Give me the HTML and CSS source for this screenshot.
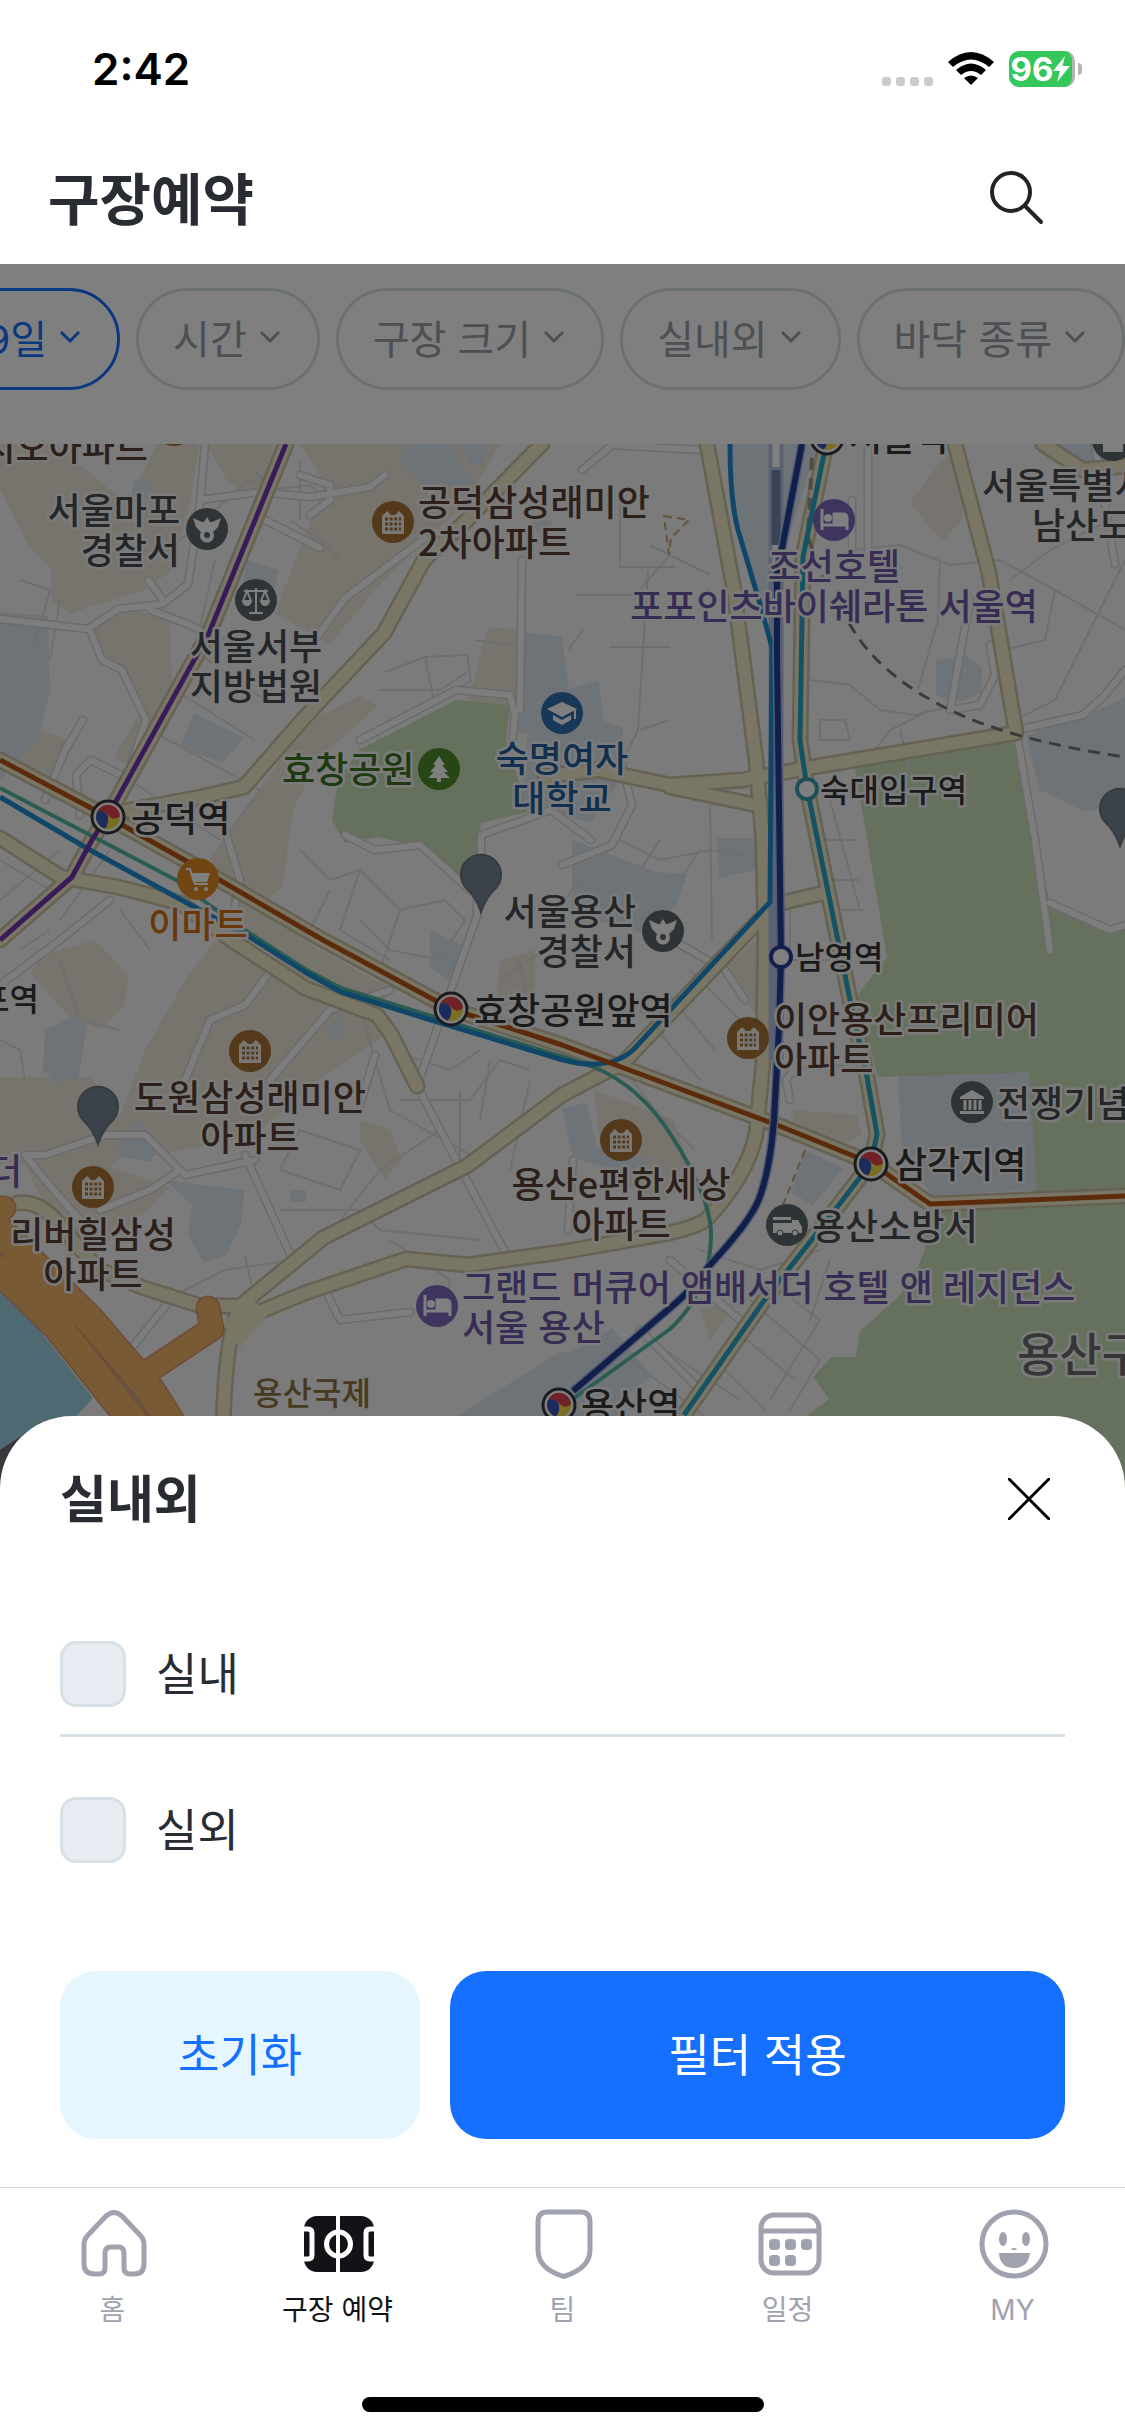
FILE: index.html
```html
<!DOCTYPE html>
<html lang="ko">

<head>
    <meta charset="UTF-8">
    <meta name="viewport" content="width=device-width, initial-scale=1.0">
    <title>구장예약</title>
    <link rel="stylesheet" href="styles.css">
</head>

<body>
    <!-- Status bar -->
    <div class="status">
        <span class="time">2:42</span>
        <div class="status-icons">
            <span class="dots"><i></i><i></i><i></i><i></i></span>
            <svg class="wifi" viewBox="0 0 46 34" width="46" height="34">
                <path d="M0 10Q23-10 46 10L41 15Q23 0 5 15Z" />
                <path d="M8 18Q23 5 38 18L33 23Q23 15 13 23Z" />
                <path d="M16 26Q23 21 30 26L23 33Z" />
            </svg>
            <span class="battery">96<svg viewBox="0 0 17 26" width="17" height="26">
                    <path d="M12 0L0 15h7L4 26 17 10H9.500Z" />
                </svg></span>
        </div>
    </div>

    <header class="header">
        <h1>구장예약</h1>
        <button class="icon-button" aria-label="검색">
            <svg viewBox="0 0 60 60" width="60" height="60">
                <circle cx="25" cy="24" r="19" />
                <path d="M39 38L55 54" />
            </svg>
        </button>
    </header>

    <main class="main">
        <!-- Filters -->
        <div class="filters">
            <button class="chip active">19일 <svg viewBox="0 0 22 14" width="22" height="14"><path d="M2 2l9 9 9-9" /></svg></button>
            <button class="chip">시간 <svg viewBox="0 0 22 14" width="22" height="14"><path d="M2 2l9 9 9-9" /></svg></button>
            <button class="chip">구장 크기 <svg viewBox="0 0 22 14" width="22" height="14"><path d="M2 2l9 9 9-9" /></svg></button>
            <button class="chip">실내외 <svg viewBox="0 0 22 14" width="22" height="14"><path d="M2 2l9 9 9-9" /></svg></button>
            <button class="chip">바닥 종류 <svg viewBox="0 0 22 14" width="22" height="14"><path d="M2 2l9 9 9-9" /></svg></button>
        </div>

        <!-- Map -->
        <svg class="map" viewBox="0 444 1125 1744">
            <defs>
                <g id="apt">
                    <circle r="21" fill="#a87436" />
                    <path d="M-11 12V-6l5-5 4 4h4l4-4 5 5v18z" fill="#f4f0ea" />
                    <path d="M-8-3H8M-8 2H8M-8 7H8" stroke="#a87436" stroke-width="3" stroke-dasharray="3 1.600" />
                </g>
                <g id="police">
                    <circle r="21" fill="#5d676d" />
                    <path d="M-14-11L-5-7H-3L0-12 3-7H5L14-11 11-2 6 3A7 7 0 1 1-6 3L-11-2z" fill="#fff" />
                    <circle cy="6" r="3" fill="#5d676d" />
                </g>
                <g id="hotel">
                    <circle r="21" fill="#7f69bd" />
                    <path d="M-12-11v21M-12 5H13M13 10V-2q0-4-4-4H0V4" fill="none" stroke="#fff" stroke-width="3" />
                    <path d="M0-6h9q4 0 4 4v6H0z" fill="#fff" />
                    <circle cx="-6" cy="-2" r="4" fill="#fff" />
                </g>
                <g id="station">
                    <circle r="16" fill="#fff" stroke="#34363d" stroke-width="3" />
                    <circle r="12" fill="#f6dc45" />
                    <path d="M-11-5A12 12 0 0 1 12-1Q7 4 2 0-5-8-11-5Z" fill="#e34250" />
                    <path d="M-11-5Q-5-8 0-1 1 7-3 11.500A12 12 0 0 1-11-5Z" fill="#3857bd" />
                </g>
                <path id="pin" d="M0 27Q-5 12-15 3A20 20 0 1 1 15 3Q5 12 0 27Z" fill="#788493" stroke="#6c7680" stroke-width="2" />
            </defs>

            <rect y="444" width="1125" height="1744" fill="#f7f7f7" />

            <!-- blocks -->
            <g fill="#efe8dc">
                <path d="M0 444h55l72 60 30-60h42l-8 55-20 72-28 20-26 8-30 8-16 8-20-15 0-32-22-22L0 490z" />
                <path d="M207 444h68l-18 55-30-18z" />
                <path d="M95 620l30-14 45 16 2 60-14 50 -20 40-24-15 27-46-20-36-24-20z" />
                <path d="M300 444h200l-35 60-80 75-55 65-55-30 30-80 20-50z" />
                <path d="M30 725l45 18-25 50-40-26z" />
                <path d="M310 720l50-24 18 10-58 52-26 50-12 80-40 30-32-60z" />
                <path d="M488 627l34 3-5 80-50-5z" />
                <path d="M145 1050l40-70 30-40 85 45 70 30 15 20-60 40-70 60-120 25-22-25z" />
                <path d="M0 1077h90l30 40 20 20-30 30 60 20-45 45-55 25L25 1165H0z" />
                <path d="M40 955l55-15 33 35-3 30-24 24-30-10-40-45z" />
                <path d="M240 890l80 60 75 40-18 15-75-28-60-45z" />
                <path d="M360 1120l30 10 12 30-18 20-24-40z" />
                <path d="M594 1090l80 30 20 60-30 20-60-20z" />
                <path d="M723 968l35-30v80z" />
                <path d="M795 1110l62 5 5 20-20 10-50-20z" />
                <path d="M942 460q30-20 20 60l-20 22-32-40z" fill="#efe6dc" />
                <path d="M500 960l35-10v45l-40 15z" />
                <path d="M700 1310l40-10-30 40z" />
                <path d="M80 1298l50 50-20 20-50-60z" />
            </g>
            <g fill="#dce6f1">
                <path d="M0 612l48 4 2 77-12 45L0 780z" />
                <path d="M405 444h42l28 38-45 8-32-28z" />
                <path d="M458 444h30l-6 22-12-2z" />
                <path d="M247 560l32 10-6 24-30-12z" />
                <path d="M194 713l50 25-22 25-42-16z" />
                <path d="M522 632l40 5 8 60-20 40-32-5 4-48z" />
                <path d="M531 700l68-20 4 40 20 8-2 50-30 45-70-20z" />
                <path d="M572 840l85 32 30 2-10 30-30 30-75-20z" />
                <path d="M717 838h38v32l-36 8z" />
                <path d="M936 660l30-5 16 12v25l-22 10-24-6z" />
                <path d="M1026 735l80-28 19-10v105l-40 10-45-22z" />
                <path d="M732 444h85l-34 115-4 80-30-60-14-70z" />
                <path d="M1057 444h68v18l-42 2z" />
                <path d="M45 1030l32-14 10 10-8 50-20 8-16-14z" />
                <path d="M118 1145l20-25 18 24-4 18-32-5z" />
                <path d="M165 1180l80 10-4 35-15 30-22 8-16-28 4-30z" />
                <path d="M562 1108l25-5 10 45 50 10-4 20-70-20z" />
                <path d="M430 930l34 16-10 40-24-20z" />
                <path d="M450 1420l110-68 30 0 40 68z" />
                <path d="M562 1358l50-30 40 48-60 44z" />
                <path d="M805 1150l38 18-30 38-22-14z" />
                <path d="M290 1190h16v12h-16z" />
                <path d="M328 1028l14-12 2 14-10 10z" />
                <path d="M527 514l26 8-12 14z" />
                <path d="M135 480l15 4-5 20-14-8z" />
            </g>
            <path d="M456 700l54 5-4 35 22 72-47 11-4 30-14 27-43-33-43-10-32 6-13-23 6-40 21-30z" fill="#cbe0bb" />
            <path d="M855 768l161-26 14 80 20 81 61 27 14-4v620H806v-130l23-17-16-22 18-20h25l4-26 36-32 18-22 11-28v-40l107-16-3-119-151 3-22-80 31-40z" fill="#cbe0bb" />
            <path d="M898 1077l131-5 8 118-105 5-30-40z" fill="#dce6f1" />

            <!-- alleys -->
            <g class="alley">
                <path d="M255 470l15 20 40-5 22 20M300 460v60M290 520l30 20 20 20M180 540l70-60 50 20 40-10" />
                <path d="M215 560l-20 90 40 30 30 20M175 690l80 50M150 730l110 60-30 40M130 780l90 60" />
                <path d="M380 690h60l30-20M385 672l40-15 42-2 4 26-35 20M425 657l8 40M475 640l55 8" />
                <path d="M300 850l30 30 30-10 40 40 45-10 20 20-25 40-50-10-30-30M330 890l-20 40M360 870l-20 60 50 30M400 910l-20 60" />
                <path d="M0 900l60-50M20 920l70-60M0 860l50 30M60 920l50-70M50 930l-30 20" />
                <path d="M575 595h60l35-40M620 487v80h55M650 545l60 30M568 650l15-20M610 647h60M648 570l-10 160-20 40M640 730l30-10" />
                <path d="M810 680l40 5 30 25 35 5 40-10M820 720h25l5 20h-30zM900 730l10 40M860 770l30-40 40-20" />
                <path d="M850 550l50-5 50 20 50-5 55 30 70 40M940 560l-2 60-20 70M1010 580l40-30 60-30M1055 590l-10 50-40 10M1125 560l-40 80-30 60-40 20" />
                <path d="M620 840l40 20 50-10 60 10M640 870l20-30M680 880l20-30M710 800l2 140M830 800l30 110M815 840h40M820 880h40M825 910h40" />
                <path d="M360 1010l30 100 90 50M390 1050l60 20 30-20M400 1100h70l30-40 30 10M490 1060l-10 60M460 1090v80M530 1080l-20 90" />
                <path d="M280 1210h80l20 20 100 10M300 1130l-20 40 60 20 20-40zM340 1220l40-50 60-40" />
                <path d="M165 1300l60-30 70-10M245 1255l15 70M390 1240l60 40-10 50" />
                <path d="M625 1070l30 40 40 40M690 970l60 60M640 1010l60 70M665 990l50 60M630 1360l80 60M650 1340l90 60" />
                <path d="M700 1250l60 20 60-20M750 1300l70 60-30 50M735 1330l60 50M715 1360l50 50M780 1290l40 30-50 80M830 1260l-20 60" />
                <path d="M0 1040l20 10 5 30M60 960l20 60 40 10M120 910l30 40M20 580l30 10-20 70M60 600l-10 60M580 880l-30 40" />
                <path d="M790 900v50M790 960h40M560 940l-60 40M520 960l10 60" />
            </g>
            <g class="street-case">
                <path d="M205 444l-5 60-12 80-25 20-45 5-30 20-88-10M150 610l40 15 30 15M90 630l12 30 20 10 24 50-20 60M163 600l-15-20M200 500l60-8 50 5 60-10 15-12M300 475l30 10v15l-20 15M265 520l55 28" />
                <path d="M315 640l30-42 80-60M360 740l96-50 54 5 5 20-4 40M522 560l-2 150M345 835l30 15 45-5 50 45M481 880v-45l70-25 40 30M562 865l50-20 20-40-10-40" />
                <path d="M45 800l20-50 18-30M80 815l-4-40 15-15 30 15M225 830l15 50-5 25M0 985l60-45 50-40" />
                <path d="M185 1080l25-60 35-15 30-40M270 1080l60-70 60-20M255 1160l-70 15-40-40-40 0-60 20-20 0 20 25 35 40M100 1210l50-20 30-20M245 1155l50 110M417 1086l90 170M417 1086l60-170 0-50M375 1055l-15 50" />
                <path d="M325 1290l15 30 70-8M130 1350l40-50M745 1000l-20-30-70-40M582 470l30-25 90 5M868 444v110M852 500v50M970 600l-20 110 30-5 15-30-5-30" />
                <path d="M1018 730l65-15 22-20 20-25M1018 740l17 100 15 110M1050 903l60 27 15-5M1095 444l20 120M740 1320l-70-60M568 1230l5-70M640 1330l60 60M790 1100l-4-20 12-15 60-5" />
            </g>
            <g class="street">
                <path d="M205 444l-5 60-12 80-25 20-45 5-30 20-88-10M150 610l40 15 30 15M90 630l12 30 20 10 24 50-20 60M163 600l-15-20M200 500l60-8 50 5 60-10 15-12M300 475l30 10v15l-20 15M265 520l55 28" />
                <path d="M315 640l30-42 80-60M360 740l96-50 54 5 5 20-4 40M522 560l-2 150M345 835l30 15 45-5 50 45M481 880v-45l70-25 40 30M562 865l50-20 20-40-10-40" />
                <path d="M45 800l20-50 18-30M80 815l-4-40 15-15 30 15M225 830l15 50-5 25M0 985l60-45 50-40" />
                <path d="M185 1080l25-60 35-15 30-40M270 1080l60-70 60-20M255 1160l-70 15-40-40-40 0-60 20-20 0 20 25 35 40M100 1210l50-20 30-20M245 1155l50 110M417 1086l90 170M417 1086l60-170 0-50M375 1055l-15 50" />
                <path d="M325 1290l15 30 70-8M130 1350l40-50M745 1000l-20-30-70-40M582 470l30-25 90 5M868 444v110M852 500v50M970 600l-20 110 30-5 15-30-5-30" />
                <path d="M1018 730l65-15 22-20 20-25M1018 740l17 100 15 110M1050 903l60 27 15-5M1095 444l20 120M740 1320l-70-60M568 1230l5-70M640 1330l60 60M790 1100l-4-20 12-15 60-5" />
            </g>

            <!-- main roads -->
            <g class="road-case">
                <path d="M286 444L209 633 115 803 92 840 72 877 0 940" />
                <path d="M0 760L108 817 197 867 323 940 451 1009 562 1045 777 1125 871 1163 930 1204 1125 1196" />
                <path d="M542 444L467 520 424 560 384 633 305 717 244 787 201 797 120 812" />
                <path d="M0 838L61 877 118 887 180 903 233 941 305 988 377 1015 391 1034 417 1086" />
                <path d="M707 444L734 590 756 760 763 840 765 940 763 1063 756 1134Q748 1175 706 1220 690 1230 652 1236L562 1252 467 1265 406 1259 305 1293 235 1322" />
                <path d="M759 920L623 1063 562 1095 467 1166 323 1238 240 1306Q224 1340 223 1440" />
                <path d="M955 444L989 573 1016 733 813 767 742 780 670 785 598 770 545 776M670 787L756 805M781 903L828 892" />
                <path d="M1043 444L1083 470 1125 466M18 1203Q40 1200 60 1225T100 1270L144 1288 201 1306 240 1306" />
                <path d="M826 444L803 557 800 740 807 788 849 995 867 1077 877 1134 871 1163 838 1206 763 1302 684 1415" />
            </g>
            <g class="road">
                <path d="M286 444L209 633 115 803 92 840 72 877 0 940" />
                <path d="M0 760L108 817 197 867 323 940 451 1009 562 1045 777 1125 871 1163 930 1204 1125 1196" />
                <path d="M542 444L467 520 424 560 384 633 305 717 244 787 201 797 120 812" />
                <path d="M0 838L61 877 118 887 180 903 233 941 305 988 377 1015 391 1034 417 1086" />
                <path d="M707 444L734 590 756 760 763 840 765 940 763 1063 756 1134Q748 1175 706 1220 690 1230 652 1236L562 1252 467 1265 406 1259 305 1293 235 1322" />
                <path d="M759 920L623 1063 562 1095 467 1166 323 1238 240 1306Q224 1340 223 1440" />
                <path d="M955 444L989 573 1016 733 813 767 742 780 670 785 598 770 545 776M670 787L756 805M781 903L828 892" />
                <path d="M1043 444L1083 470 1125 466M18 1203Q40 1200 60 1225T100 1270L144 1288 201 1306 240 1306" />
                <path d="M826 444L803 557 800 740 807 788 849 995 867 1077 877 1134 871 1163 838 1206 763 1302 684 1415" />
            </g>
            <path d="M222 1324l26-26 22 14-30 36z" fill="#f2ecca" />

            <!-- river and expressway -->
            <path d="M0 1280L93 1398 68 1425 0 1470z" fill="#9fd2e6" />
            <path d="M0 1450l30-20v60H0z" fill="#747078" />
            <path d="M0 1246L90 1335 165 1430" fill="none" stroke="#aecba0" stroke-width="34" />
            <g class="express-case">
                <path d="M0 1231L90 1320 150 1390 172 1425M0 1270L57 1326 136 1425" stroke-width="31" />
                <path d="M144 1374L212 1329 208 1308M0 1208H4" />
            </g>
            <g class="express">
                <path d="M0 1231L90 1320 150 1390 172 1425M0 1270L57 1326 136 1425" stroke-width="28" />
                <path d="M144 1374L212 1329 208 1308M0 1208H4" />
            </g>

            <!-- railways -->
            <path d="M776 444V1060" class="line" stroke="#b9c4e8" stroke-width="15" />
            <path d="M776 470V545" class="line" stroke="#7288ac" stroke-width="9" />
            <path d="M776 444V467M776 545V575" class="line" stroke="#fff" stroke-width="7" />
            <path d="M849 623Q878 675 950 710 1011 740 1125 757" class="line" stroke="#777" stroke-width="3" stroke-dasharray="12 8" />
            <path d="M812 458l-4 80 15 40" class="line" stroke="#9d9a8a" stroke-width="4" stroke-dasharray="12 8" />
            <path d="M664 516l25 4-18 18-2 16zM805 1150l-24 60" class="line" stroke="#c9a86e" stroke-width="2" stroke-dasharray="8 5" />
            <path d="M0 788L90 835 176 880 212 907 248 932 305 969 341 988 431 1016 563 1057 591 1066Q640 1085 673 1138 709 1195 711 1231 712 1290 670 1329L598 1381 573 1399" class="line" stroke="#54b9a6" stroke-width="4" />
            <path d="M0 797L90 850 176 897 248 936 305 972 341 992 431 1020 563 1060Q610 1072 634 1049L770 902 772 647 758 597 738 530Q730 500 730 444" class="line" stroke="#218fd0" stroke-width="5" />
            <path d="M0 760L108 817 197 867 323 940 451 1009 562 1045 777 1125 871 1163 930 1204 1125 1196" class="line" stroke="#ba5716" stroke-width="5" />
            <path d="M286 444L209 633 115 803 92 840 72 877 0 940" class="line" stroke="#7336b4" stroke-width="5" />
            <path d="M826 444L803 557 800 740 807 788 849 995 867 1077 877 1134 871 1163 838 1206 763 1302 684 1415" class="line" stroke="#2aa5c6" stroke-width="5" />
            <path d="M802 444L783 543 777 573V657L781 956 779 1027 774 1120Q770 1170 759 1199 750 1222 709 1266 695 1286 677 1302L573 1391" class="line" stroke="#a9b6e2" stroke-width="9" />
            <path d="M802 444L783 543 777 573V657L781 956 779 1027 774 1120Q770 1170 759 1199 750 1222 709 1266 695 1286 677 1302L573 1391" class="line" stroke="#223e98" stroke-width="6" />
            <circle cx="807" cy="789" r="10" fill="#fff" stroke="#3a9db5" stroke-width="4" />
            <circle cx="781" cy="957" r="10" fill="#fff" stroke="#263f9c" stroke-width="4" />

            <!-- markers -->
            <use href="#apt" x="393" y="522" />
            <use href="#apt" x="174" y="425" />
            <use href="#apt" x="748" y="1038" />
            <use href="#apt" x="250" y="1051" />
            <use href="#apt" x="93" y="1187" />
            <use href="#apt" x="621" y="1140" />
            <use href="#police" x="207" y="529" />
            <use href="#police" x="663" y="931" />
            <use href="#hotel" x="834" y="520" />
            <use href="#hotel" x="437" y="1306" />
            <use href="#station" x="108" y="817" />
            <use href="#station" x="451" y="1009" />
            <use href="#station" x="871" y="1164" />
            <use href="#station" x="559" y="1405" />
            <use href="#station" x="827" y="438" />
            <circle cx="1113" cy="440" r="21" fill="#5d676d" />
            <path d="M1103 444h20v8h-20z" fill="#fff" />
            <g transform="translate(256 600)">
                <circle r="21" fill="#5d676d" />
                <path d="M-12-9H12M0-12V12M-7 13H7M-9-9l-4 10h8zM9-9l-4 10h8z" fill="none" stroke="#fff" stroke-width="2" />
                <path d="M-14 1h10q-1 5-5 5t-5-5zM4 1h10q-1 5-5 5t-5-5z" fill="#fff" />
            </g>
            <g transform="translate(439 769)">
                <circle r="21" fill="#4e8c2c" />
                <path d="M0-13L6-4H3L9 3H5l6 6H2v4h-4V9h-9l6-6h-4l6-7h-3z" fill="#fff" />
            </g>
            <g transform="translate(562 713)">
                <circle r="21" fill="#2f70ad" />
                <path d="M0-11L15-4 0 4-15-4z" fill="#fff" />
                <path d="M-9 2L0 7 9 2V7L0 12-9 7zM12-3h2v9h-2z" fill="#fff" />
            </g>
            <g transform="translate(198 879)">
                <circle r="21" fill="#e58d24" />
                <path d="M-12-10h4l5 15H10" fill="none" stroke="#fff" stroke-width="2" />
                <path d="M-8-6H12L9 3H-5z" fill="#fff" />
                <circle cx="-2" cy="10" r="2" fill="#fff" />
                <circle cx="8" cy="10" r="2" fill="#fff" />
            </g>
            <g transform="translate(972 1102)">
                <circle r="21" fill="#5d676d" />
                <path d="M0-12L12-5v2H-12v-2zM-12 9H12v3H-12z" fill="#fff" />
                <path d="M-7-2V8M-2-2V8M3-2V8M8-2V8" stroke="#fff" stroke-width="3" />
            </g>
            <g transform="translate(787 1225)">
                <circle r="21" fill="#5d676d" />
                <path d="M-14-8H4v3h-18zM-14-2H5v-3h6l4 7v6h-29z" fill="#fff" />
                <circle cx="-7" cy="8" r="3" fill="#fff" stroke="#5d676d" />
                <circle cx="8" cy="8" r="3" fill="#fff" stroke="#5d676d" />
            </g>

            <!-- labels -->
            <g class="label">
                <g class="gray">
                    <text x="180" y="524" class="end">서울마포</text>
                    <text x="180" y="564" class="end">경찰서</text>
                    <text x="256" y="660" class="mid">서울서부</text>
                    <text x="256" y="700" class="mid">지방법원</text>
                    <text x="982" y="499">서울특별시</text>
                    <text x="1032" y="539">남산도서관</text>
                    <text x="636" y="925" class="end">서울용산</text>
                    <text x="636" y="965" class="end">경찰서</text>
                    <text x="997" y="1117">전쟁기념관</text>
                    <text x="812" y="1240">용산소방서</text>
                </g>
                <g class="brown">
                    <text x="148" y="461" class="end">시오아파트</text>
                    <text x="418" y="516">공덕삼성래미안</text>
                    <text x="418" y="556">2차아파트</text>
                    <text x="774" y="1033">이안용산프리미어</text>
                    <text x="774" y="1073">아파트</text>
                    <text x="250" y="1111" class="mid">도원삼성래미안</text>
                    <text x="250" y="1151" class="mid">아파트</text>
                    <text x="93" y="1248" class="mid">리버힐삼성</text>
                    <text x="93" y="1288" class="mid">아파트</text>
                    <text x="621" y="1198" class="mid">용산e편한세상</text>
                    <text x="621" y="1238" class="mid">아파트</text>
                </g>
                <g class="black">
                    <text x="131" y="832">공덕역</text>
                    <text x="474" y="1024">효창공원앞역</text>
                    <text x="894" y="1178">삼각지역</text>
                    <text x="581" y="1419">용산역</text>
                    <text x="849" y="451">서울역</text>
                    <text x="820" y="802" class="small">숙대입구역</text>
                    <text x="795" y="969" class="small">남영역</text>
                    <text x="39" y="1011" class="small end">마포역</text>
                </g>
                <g class="purple">
                    <text x="834" y="580" class="mid">조선호텔</text>
                    <text x="834" y="620" class="mid">포포인츠바이쉐라톤 서울역</text>
                    <text x="462" y="1301">그랜드 머큐어 앰배서더 호텔 앤 레지던스</text>
                    <text x="462" y="1341">서울 용산</text>
                    <text x="22" y="1185" class="end">더</text>
                </g>
                <text x="282" y="783" class="green">효창공원</text>
                <text x="562" y="772" class="mid blue">숙명여자</text>
                <text x="562" y="812" class="mid blue">대학교</text>
                <text x="198" y="938" class="mid orange">이마트</text>
                <text x="312" y="1405" class="mid small tan">용산국제</text>
                <text x="312" y="1443" class="mid small tan">업무지구</text>
                <text x="1017" y="1371" class="big">용산구</text>
            </g>

            <use href="#pin" x="481" y="885" />
            <use href="#pin" x="98" y="1117" />
            <use href="#pin" x="1120" y="819" />
        </svg>

        <div class="dim"></div>

        <!-- Bottom sheet -->
        <section class="sheet">
            <div class="sheet-head">
                <h2>실내외</h2>
                <button class="icon-button close" aria-label="닫기">
                    <svg viewBox="0 0 42 42" width="42" height="42">
                        <path d="M1 1L41 41M41 1L1 41" />
                    </svg>
                </button>
            </div>
            <ul class="options">
                <li><label><input type="checkbox" name="indoor"><span>실내</span></label></li>
                <li><label><input type="checkbox" name="outdoor"><span>실외</span></label></li>
            </ul>
            <div class="actions">
                <button class="reset">초기화</button>
                <button class="apply">필터 적용</button>
            </div>
        </section>
    </main>

    <nav class="tabs">
        <a href="#">
            <svg viewBox="0 0 72 72" width="72" height="72">
                <path d="M29 8Q37 1 45 8L63 27Q67 31 67 37V56Q67 66 57 66H53Q47 66 47 60V45Q47 39 41 39H34Q28 39 28 45V60Q28 66 22 66H18Q7 66 7 56V37Q7 31 11 27Z" />
            </svg>
            홈
        </a>
        <a href="#" class="on">
            <svg viewBox="0 0 72 72" width="72" height="72">
                <rect x="2" y="8" width="70" height="56" rx="13" fill="#111316" stroke="none" />
                <g stroke="#fff" stroke-width="5">
                    <path d="M36 7V65" stroke-width="4" />
                    <circle cx="36.500" cy="36" r="12" />
                    <path d="M1 21H6Q10 21 10 25V47Q10 51 6 51H1M73 21H68Q64 21 64 25V47Q64 51 68 51H73" />
                </g>
            </svg>
            구장 예약
        </a>
        <a href="#">
            <svg viewBox="0 0 72 72" width="72" height="72">
                <path d="M20 4H54Q63 4 63 14V42Q63 60 38 68 37 69 35 68 11 60 11 42V14Q11 4 20 4Z" />
            </svg>
            팀
        </a>
        <a href="#">
            <svg viewBox="0 0 72 72" width="72" height="72">
                <rect x="9" y="7" width="58" height="58" rx="13" />
                <path d="M9 23H67" />
                <g fill="#a0a2b0" stroke="none">
                    <rect x="17" y="31" width="11" height="11" rx="4" />
                    <rect x="33" y="31" width="11" height="11" rx="4" />
                    <rect x="49" y="31" width="11" height="11" rx="4" />
                    <rect x="17" y="47" width="11" height="11" rx="4" />
                    <rect x="33" y="47" width="11" height="11" rx="4" />
                </g>
            </svg>
            일정
        </a>
        <a href="#">
            <svg viewBox="0 0 72 72" width="72" height="72">
                <circle cx="37" cy="36" r="32" />
                <g fill="#a0a2b0" stroke="none">
                    <ellipse cx="26" cy="31" rx="4" ry="7" />
                    <ellipse cx="49" cy="31" rx="4" ry="7" />
                    <ellipse cx="37" cy="41" rx="3" ry="1" />
                    <path d="M22 45H53Q51 60 37 60T22 45Z" />
                </g>
            </svg>
            MY
        </a>
    </nav>
    <div class="home-bar"></div>
</body>

</html>
```
FILE: styles.css
```css
* {
    box-sizing: border-box;
}

body {
    margin: 0;
    display: flex;
    flex-direction: column;
    min-height: 100vh;
    background-color: #fff;
    color: #2a2c33;
    font-family: Inter, "Noto Sans CJK KR", sans-serif;
    overflow-x: hidden;
}

button {
    font-family: inherit;
    border: 0;
    padding: 0;
    background: none;
    cursor: pointer;
}

h1,
h2 {
    margin: 0;
    padding-bottom: 6px;
    font-weight: bold;
}

/* status bar */
.status {
    display: flex;
    justify-content: space-between;
    align-items: center;
    height: 138px;
    padding: 0 43px 0 92px;
    color: #000;
}

.time {
    font-size: 44px;
    font-weight: 600;
}

.status-icons {
    display: flex;
    align-items: center;
}

.dots {
    display: flex;
    gap: 5px;
    margin: 24px 15px 0 0;
}

.dots i {
    width: 9px;
    height: 9px;
    border-radius: 3px;
    background-color: #cbcbcb;
}

.wifi {
    margin-right: 15px;
}

.battery {
    position: relative;
    display: flex;
    align-items: center;
    justify-content: center;
    width: 66px;
    height: 36px;
    margin-right: 7px;
    border-radius: 10px;
    border-right: 3px solid #b5b5b5;
    background-color: #34c759;
    color: #fff;
    font-size: 33px;
    font-weight: bold;
}

.battery svg {
    fill: #fff;
}

.battery::after {
    content: "";
    position: absolute;
    right: -10px;
    top: 12px;
    width: 4px;
    height: 12px;
    border-radius: 0 4px 4px 0;
    background-color: #b5b5b5;
}

/* header */
.header {
    display: flex;
    justify-content: space-between;
    align-items: center;
    height: 126px;
    padding: 0 79px 6px 48px;
}

.header h1 {
    font-size: 56px;
}

.icon-button {
    display: flex;
}

.icon-button svg {
    fill: none;
    stroke: #222427;
    stroke-width: 4;
    stroke-linecap: round;
}

.icon-button.close svg {
    stroke: #000;
    stroke-width: 3;
}

.main {
    position: relative;
    flex: 1;
    overflow: hidden;
}

/* filters */
.filters {
    display: flex;
    justify-content: flex-end;
    gap: 16px;
    padding: 24px 0 54px;
}

.chip {
    flex-shrink: 0;
    display: flex;
    align-items: center;
    gap: 12px;
    height: 102px;
    padding: 0 36px 4px 34px;
    border: 3px solid #d7e0e3;
    border-radius: 51px;
    color: #989ea6;
    font-size: 40px;
}

.chip svg {
    fill: none;
    stroke: #989ea6;
    stroke-width: 3;
}

.chip.active {
    border-color: #1570ff;
    color: #1570ff;
}

.chip.active svg {
    stroke: #1570ff;
}

/* map */
.map {
    display: block;
    width: 100%;
    margin-bottom: -1px;
}

.alley {
    fill: none;
    stroke: #dedede;
    stroke-width: 2;
}

.street-case,
.street,
.road-case,
.road,
.express-case,
.express {
    fill: none;
    stroke-linecap: round;
    stroke-linejoin: round;
}

.street-case {
    stroke: #d6d6d6;
    stroke-width: 9;
}

.street {
    stroke: #fbfbfb;
    stroke-width: 6;
}

.road-case {
    stroke: #cdc5a6;
    stroke-width: 17;
}

.road {
    stroke: #f2ecca;
    stroke-width: 12;
}

.express-case {
    stroke: #dc9470;
    stroke-width: 25;
}

.express {
    stroke: #f0b568;
    stroke-width: 22;
}

.line {
    fill: none;
    stroke-linejoin: round;
}

.label {
    font-family: "Noto Sans CJK KR", sans-serif;
    font-size: 36px;
    font-weight: 500;
    paint-order: stroke;
    stroke: #f6f6f6;
    stroke-width: 5px;
    stroke-linejoin: round;
}

.label .end {
    text-anchor: end;
}

.label .mid {
    text-anchor: middle;
}

.label .small {
    font-size: 32px;
}

.label .big {
    font-size: 46px;
    fill: #6c6c6c;
}

.gray {
    fill: #484c50;
}

.brown {
    fill: #5a3e35;
}

.black {
    fill: #363636;
}

.purple {
    fill: #6c58a8;
}

.green {
    fill: #3c7523;
}

.blue {
    fill: #235f9c;
}

.orange {
    fill: #d26f12;
}

.tan {
    fill: #8f7440;
}

.dim {
    position: absolute;
    inset: 0;
    background-color: rgba(0, 0, 0, .5);
}

/* bottom sheet */
.sheet {
    position: absolute;
    left: 0;
    right: 0;
    bottom: 0;
    padding: 41px 60px 48px;
    border-radius: 72px 72px 0 0;
    background-color: #fff;
}

.sheet-head {
    display: flex;
    justify-content: space-between;
    align-items: center;
    height: 84px;
    margin-bottom: 40px;
    padding-right: 15px;
}

.sheet-head h2 {
    font-size: 51px;
}

.options {
    list-style: none;
    margin: 0 0 81px;
    padding: 0;
}

.options li {
    padding: 60px 0 27px;
}

.options li:first-child {
    border-bottom: 3px solid #d7e0e5;
}

.options label {
    display: flex;
    align-items: center;
    gap: 30px;
    height: 66px;
    font-size: 45px;
}

.options span {
    padding-bottom: 6px;
}

.options input {
    appearance: none;
    width: 66px;
    height: 66px;
    margin: 0;
    border: 3px solid #d8e1e5;
    border-radius: 16px;
    background-color: #e6ecf2;
}

.options input:checked {
    background-color: #1570ff;
}

.actions {
    display: grid;
    grid-template-columns: 360fr 615fr;
    gap: 30px;
}

.actions button {
    height: 168px;
    padding-bottom: 6px;
    border-radius: 36px;
    font-size: 45px;
}

.actions .reset {
    background-color: #e6f6ff;
    color: #1570ff;
}

.actions .apply {
    background-color: #1570ff;
    color: #fff;
}

/* tabs */
.tabs {
    display: flex;
    height: 210px;
    padding-top: 20px;
    border-top: 1px solid #d4d5d7;
}

.tabs a {
    flex: 1;
    display: flex;
    flex-direction: column;
    align-items: center;
    gap: 10px;
    color: #a0a2b0;
    font-size: 28px;
    line-height: 40px;
    text-decoration: none;
}

.tabs a.on {
    color: #111316;
}

.tabs svg {
    fill: none;
    stroke: #a0a2b0;
    stroke-width: 5;
}

.home-bar {
    width: 402px;
    height: 15px;
    margin: 0 auto 24px;
    border-radius: 8px;
    background-color: #000;
}
```
